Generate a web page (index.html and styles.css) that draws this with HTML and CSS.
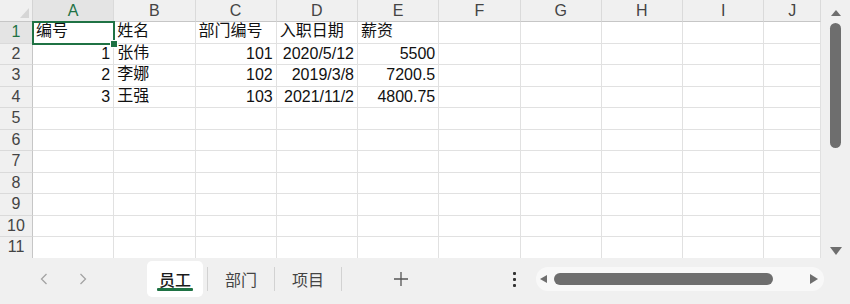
FILE: index.html
```html
<!DOCTYPE html>
<html lang="zh-CN">
<head>
    <meta charset="UTF-8">
    <title>员工表</title>
    <link rel="stylesheet" href="styles.css">
</head>
<body>
    <div class="sheet">
        <div class="grid" id="grid"></div>
        <div class="vscroll">
            <span class="tri tri-up"></span>
            <div class="vthumb"></div>
            <span class="tri tri-down"></span>
        </div>
    </div>

    <div class="tabbar">
        <div class="nav">
            <svg width="8" height="12" viewBox="0 0 8 12"><path d="M6.5 1 L1.5 6 L6.5 11" fill="none" stroke="#a3a3a3" stroke-width="1.3"/></svg>
            <svg width="8" height="12" viewBox="0 0 8 12"><path d="M1.5 1 L6.5 6 L1.5 11" fill="none" stroke="#a3a3a3" stroke-width="1.3"/></svg>
        </div>
        <div class="tab active">员工</div>
        <span class="sep first"></span>
        <div class="tab">部门</div>
        <span class="sep"></span>
        <div class="tab">项目</div>
        <span class="sep"></span>
        <div class="add">
            <svg width="14" height="14" viewBox="0 0 14 14"><path d="M7 0 V14 M0 7 H14" stroke="#555" stroke-width="1.3"/></svg>
        </div>
        <div class="more">
            <i></i><i></i><i></i>
        </div>
        <div class="hscroll">
            <span class="tri tri-left"></span>
            <div class="hthumb"></div>
            <span class="tri tri-right"></span>
        </div>
    </div>

    <script>
        const cols = ['A', 'B', 'C', 'D', 'E', 'F', 'G', 'H', 'I', 'J'];
        const rows = [
            [['编号'], ['姓名'], ['部门编号'], ['入职日期'], ['薪资']],
            [['1', 'num'], ['张伟'], ['101', 'num'], ['2020/5/12', 'num'], ['5500', 'num']],
            [['2', 'num'], ['李娜'], ['102', 'num'], ['2019/3/8', 'num'], ['7200.5', 'num']],
            [['3', 'num'], ['王强'], ['103', 'num'], ['2021/11/2', 'num'], ['4800.75', 'num']]
        ];
        const grid = document.getElementById('grid');

        function addCell(cls, text) {
            const div = document.createElement('div');
            div.className = 'cell ' + cls;
            div.textContent = text || '';
            grid.appendChild(div);
            return div;
        }

        addCell('corner');
        cols.forEach((c, i) => addCell('col-head' + (i === 0 ? ' current' : ''), c));

        for (let r = 1; r <= 11; r++) {
            addCell('row-head' + (r === 1 ? ' current' : ''), r);
            const data = rows[r - 1] || [];
            for (let c = 0; c < cols.length; c++) {
                const item = data[c] || [''];
                const cell = addCell(item[1] || 'text', item[0]);
                if (r === 1 && c === 0) {
                    cell.classList.add('selected');
                }
            }
        }
    </script>
</body>
</html>
```

FILE: styles.css
```css
body {
    margin: 0;
    width: 850px;
    height: 304px;
    overflow: hidden;
    background-color: #f0f0f0;
    font-family: "Liberation Sans", Arial, "Noto Sans CJK SC", sans-serif;
    color: #111;
}
.sheet {
    display: flex;
    height: 258px;
    overflow: hidden;
}
.grid {
    display: grid;
    grid-template-columns: 33px repeat(9, 81.25px) 56.75px;
    grid-template-rows: 22px repeat(11, 21.5px);
    width: 821px;
    background-color: white;
}
.cell {
    display: flex;
    align-items: center;
    padding: 0 3px;
    border-right: 1px solid #e1e1e1;
    border-bottom: 1px solid #e1e1e1;
    box-sizing: border-box;
    font-size: 16px;
    line-height: 18px;
    white-space: nowrap;
    overflow: hidden;
    position: relative;
}
.text {
    padding-bottom: 2px;
}
.num {
    justify-content: flex-end;
}
.corner {
    background-color: #f0f0f0;
    border-right-color: #d4d4d4;
    border-bottom-color: #c6c6c6;
}
.corner::after {
    content: "";
    position: absolute;
    right: 3px;
    bottom: 3px;
    width: 9px;
    height: 10px;
    background-color: #d6d6d6;
    clip-path: polygon(100% 0, 100% 100%, 0 100%);
}
.col-head {
    justify-content: center;
    background-color: #f0f0f0;
    color: #444;
    border-right-color: #dadada;
    border-bottom-color: #c6c6c6;
}
.row-head {
    justify-content: center;
    padding: 0;
    background-color: #f0f0f0;
    color: #444;
    border-right-color: #c6c6c6;
    border-bottom-color: #dadada;
}
.current {
    background-color: #e4e4e4;
    color: #1f7244;
}
.selected {
    overflow: visible;
    z-index: 1;
}
.selected::before {
    content: "";
    position: absolute;
    left: -1px;
    top: -1px;
    right: -2px;
    bottom: -2px;
    border: 2px solid #1f7244;
}
.selected::after {
    content: "";
    position: absolute;
    right: -5px;
    bottom: -5px;
    width: 6px;
    height: 6px;
    background-color: #1f7244;
    border: 1px solid white;
}
.vscroll {
    flex: 1;
    display: flex;
    flex-direction: column;
    align-items: center;
    padding-top: 10px;
    box-sizing: border-box;
}
.vthumb {
    width: 11px;
    height: 125px;
    margin-top: 7px;
    border-radius: 6px;
    background-color: #6e6e6e;
}
.tri {
    width: 0;
    height: 0;
    display: block;
}
.tri-up {
    border-left: 5px solid transparent;
    border-right: 5px solid transparent;
    border-bottom: 6px solid #6e6e6e;
}
.tri-down {
    margin-top: auto;
    margin-bottom: 3px;
    border-left: 6px solid transparent;
    border-right: 6px solid transparent;
    border-top: 8px solid #6e6e6e;
}
.tri-left {
    border-top: 4px solid transparent;
    border-bottom: 4px solid transparent;
    border-right: 7px solid #6e6e6e;
}
.tri-right {
    margin-left: auto;
    border-top: 5px solid transparent;
    border-bottom: 5px solid transparent;
    border-left: 8px solid #6e6e6e;
}
.tabbar {
    display: flex;
    align-items: center;
    height: 42px;
}
.nav {
    width: 147px;
    display: flex;
    align-items: center;
    gap: 31px;
    padding-left: 40px;
    box-sizing: border-box;
}
.tab {
    width: 66px;
    height: 36px;
    display: flex;
    align-items: center;
    justify-content: center;
    font-size: 16px;
    color: #444;
}
.tab.active {
    width: 56px;
    position: relative;
    background-color: white;
    border-radius: 5px;
    color: #1a1a1a;
    font-weight: 500;
}
.tab.active::after {
    content: "";
    position: absolute;
    left: 10px;
    right: 10px;
    bottom: 6px;
    height: 3px;
    border-radius: 1px;
    background-color: #1f7244;
}
.sep {
    width: 1px;
    height: 24px;
    background-color: #d2d2d2;
}
.sep.first {
    margin-left: 4px;
}
.add {
    margin-left: 52px;
    display: flex;
}
.more {
    margin-left: 99px;
    width: 14px;
    display: flex;
    flex-direction: column;
    align-items: center;
    gap: 3px;
}
.more i {
    width: 3px;
    height: 3px;
    border-radius: 1px;
    background-color: #333;
}
.hscroll {
    width: 288px;
    height: 24px;
    margin-left: 15px;
    padding: 0 6px 0 4px;
    box-sizing: border-box;
    display: flex;
    align-items: center;
    border-radius: 12px;
    background-color: #f8f8f8;
}
.hthumb {
    width: 219px;
    height: 12px;
    margin-left: 7px;
    border-radius: 6px;
    background-color: #6e6e6e;
}
```
